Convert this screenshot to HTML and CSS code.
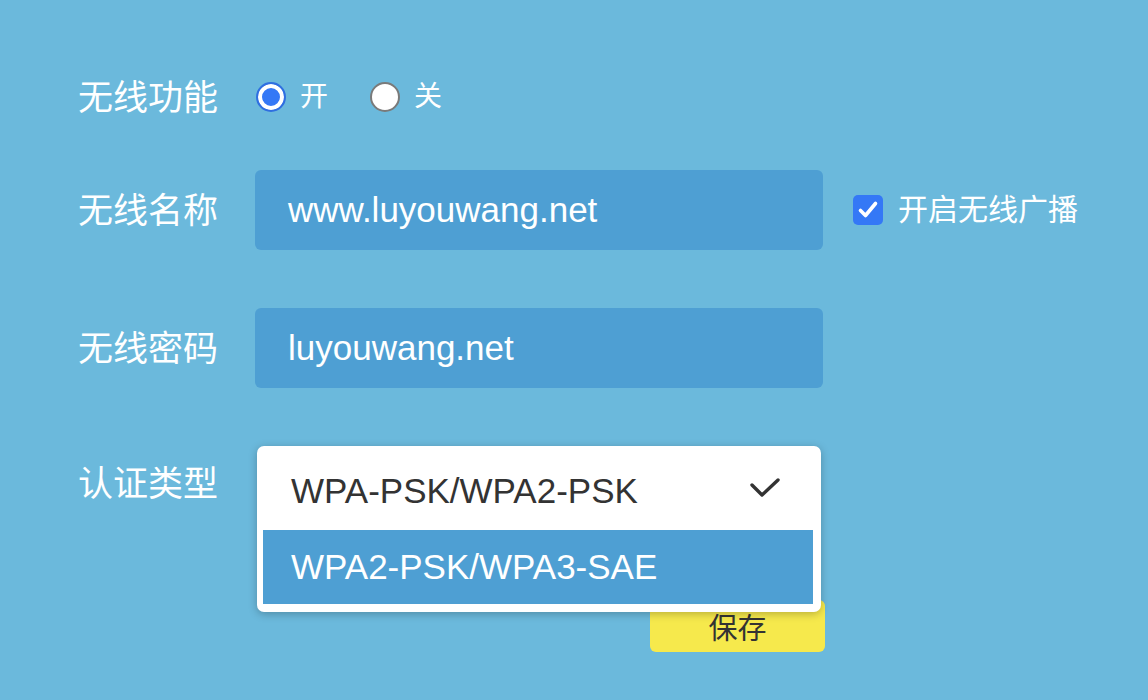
FILE: index.html
```html
<!DOCTYPE html>
<html lang="zh-CN">
<head>
  <meta charset="UTF-8">
  <meta name="viewport" content="width=device-width, initial-scale=1.0">
  <title>无线设置</title>
  <link rel="stylesheet" href="styles.css">
</head>
<body>
  <form class="wifi-form">
    <div class="row row-switch">
      <label class="row-label">无线功能</label>
      <div class="radio-group">
        <span class="radio-item"><span class="radio checked"></span>开</span>
        <span class="radio-item"><span class="radio"></span>关</span>
      </div>
    </div>

    <div class="row">
      <label class="row-label">无线名称</label>
      <div class="field">www.luyouwang.net</div>
      <span class="check-item">
        <span class="checkbox">
          <svg width="24" height="24" viewBox="0 0 24 24"><path d="M4.5 12.5 L9.5 17.5 L19.5 5.5" fill="none" stroke="#fff" stroke-width="3.6" stroke-linecap="round" stroke-linejoin="round"/></svg>
        </span>
        开启无线广播
      </span>
    </div>

    <div class="row">
      <label class="row-label">无线密码</label>
      <div class="field">luyouwang.net</div>
    </div>

    <div class="row">
      <label class="row-label">认证类型</label>
      <div class="select-wrap">
        <!-- 下拉菜单展开状态 -->
        <div class="select-menu">
          <div class="select-current">
            <span>WPA-PSK/WPA2-PSK</span>
            <svg class="chevron" width="32" height="22" viewBox="0 0 32 22"><path d="M3 9 L13 19 L29 4" fill="none" stroke="#333" stroke-width="3.4" stroke-linecap="round" stroke-linejoin="round"/></svg>
          </div>
          <div class="select-option active">WPA2-PSK/WPA3-SAE</div>
        </div>
      </div>
    </div>

    <div class="row row-actions">
      <span></span>
      <button type="button" class="save-btn">保存</button>
    </div>
  </form>
</body>
</html>
```

FILE: styles.css
```css
* {
  margin: 0;
  padding: 0;
  box-sizing: border-box;
  font-family: 'Liberation Sans', 'Noto Sans CJK SC', sans-serif;
}

body {
  background: #6bb9dc;
  color: #fff;
  padding: 79px 0 0 78px;
  height: 700px;
  overflow: hidden;
}

.wifi-form {
  display: flex;
  flex-direction: column;
  gap: 58px;
}

.row {
  display: grid;
  grid-template-columns: 177px 568px auto;
  align-items: center;
}

.row-switch {
  height: 36px;
  margin-bottom: -3px;
}

.row-label {
  font-size: 35px;
  color: #fff;
  line-height: 1;
}

.radio-group {
  display: flex;
  align-items: center;
  gap: 41px;
}

.radio-item {
  display: flex;
  align-items: center;
  gap: 14px;
  font-size: 28px;
  line-height: 1;
}

.radio {
  width: 30px;
  height: 30px;
  border-radius: 50%;
  background: #fff;
  border: 2px solid #7a7a7a;
  margin-left: 1px;
}

.radio.checked {
  border: 2px solid #2f6fe0;
  background: #3478f6;
  box-shadow: inset 0 0 0 4px #fff;
}

.field {
  height: 80px;
  background: #4e9fd3;
  border-radius: 6px;
  padding-left: 33px;
  display: flex;
  align-items: center;
  font-size: 35px;
  color: #fff;
}

.check-item {
  display: flex;
  align-items: center;
  gap: 15px;
  margin-left: 30px;
  font-size: 30px;
  line-height: 1;
}

.checkbox {
  width: 30px;
  height: 30px;
  border-radius: 5px;
  background: #3478f6;
  display: flex;
  align-items: center;
  justify-content: center;
}

.select-wrap {
  position: relative;
  height: 80px;
  align-self: start;
}

.row:has(.select-wrap) .row-label {
  align-self: start;
  margin-top: 20px;
}

.select-menu {
  position: absolute;
  top: 0;
  left: 2px;
  right: 2px;
  height: 166px;
  background: #fff;
  border-radius: 7px;
  box-shadow: 0 2px 8px rgba(0, 0, 0, 0.25);
  padding: 0 8px 8px 6px;
  z-index: 2;
}

.select-current {
  height: 84px;
  display: flex;
  align-items: center;
  justify-content: space-between;
  padding: 6px 32px 0 28px;
  font-size: 35px;
  color: #333;
}

.chevron {
  margin-top: -8px;
}

.select-option {
  height: 74px;
  display: flex;
  align-items: center;
  padding-left: 28px;
  font-size: 35px;
  color: #fff;
}

.select-option.active {
  background: #4e9fd3;
}

.row-actions {
  margin-top: 16px;
}

.save-btn {
  justify-self: end;
  margin-right: -2px;
  width: 175px;
  height: 52px;
  border: none;
  border-radius: 6px;
  background: #f6e94c;
  color: #333;
  font-size: 29px;
  padding-top: 0;
  cursor: pointer;
}
```
